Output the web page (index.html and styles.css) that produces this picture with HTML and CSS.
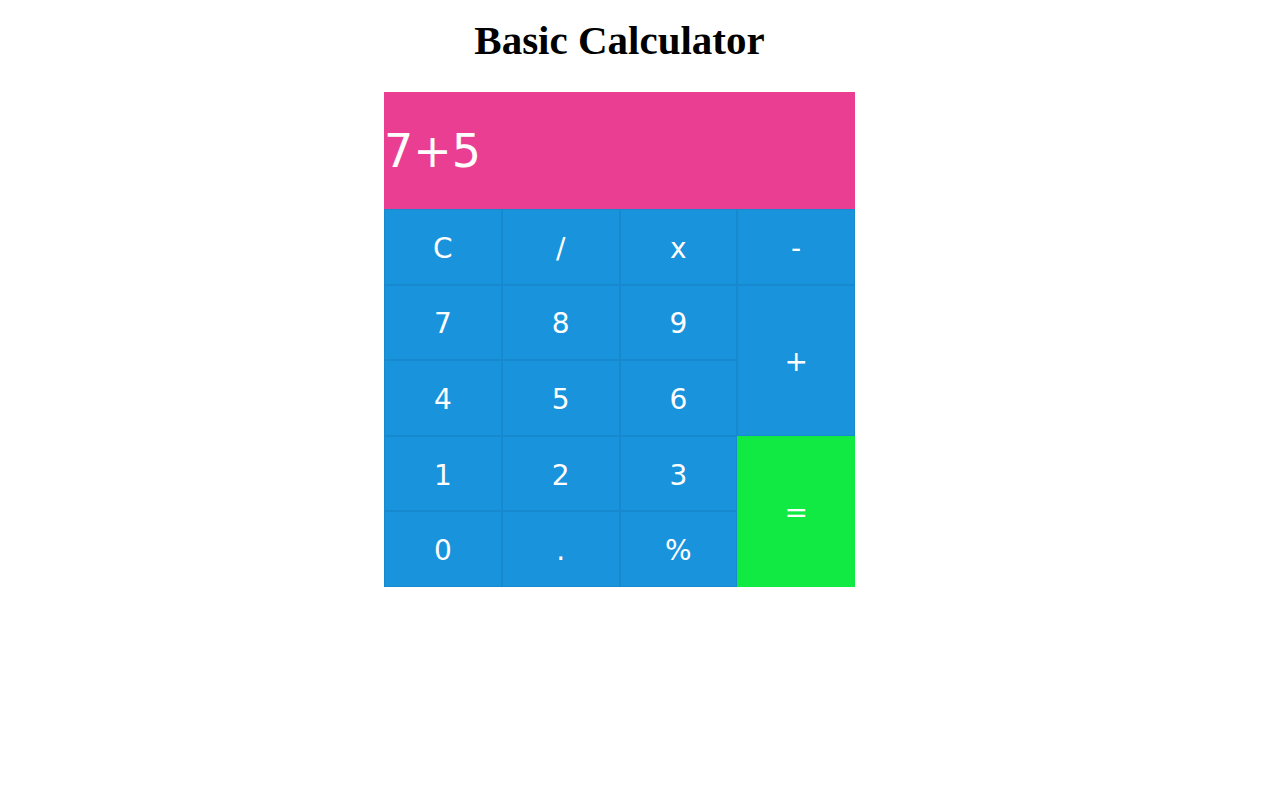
FILE: index.html
```html
<!DOCTYPE html>
<html lang="en">
<head>
<meta charset="utf-8">
<title>Basic Calculator</title>
<link rel="stylesheet" href="styles.css">
</head>
<body>
<div class="page">
  <h1 class="title">Basic Calculator</h1>
  <div class="calc">
    <div class="display">7+5</div>
    <div class="keys">
      <button class="key">C</button>
      <button class="key">/</button>
      <button class="key">x</button>
      <button class="key">-</button>
      <button class="key">7</button>
      <button class="key">8</button>
      <button class="key">9</button>
      <button class="key key-plus">+</button>
      <button class="key">4</button>
      <button class="key">5</button>
      <button class="key">6</button>
      <button class="key">1</button>
      <button class="key">2</button>
      <button class="key">3</button>
      <button class="key key-eq">=</button>
      <button class="key">0</button>
      <button class="key">.</button>
      <button class="key">%</button>
    </div>
  </div>
</div>
</body>
</html>
```

FILE: styles.css
```css
html, body {
  margin: 0;
  padding: 0;
  background: #ffffff;
}

.page {
  width: 1223px;
  margin-left: 8px;
  display: flex;
  flex-direction: column;
  align-items: center;
}

.title {
  margin: 17px 0 28px;
  font-family: "Liberation Serif", "Times New Roman", serif;
  font-weight: bold;
  font-size: 41px;
  line-height: 47px;
  color: #000;
}

.calc {
  width: 471px;
  display: flex;
  flex-direction: column;
}

.display {
  height: 117px;
  background: #e93e91;
  color: #ffffff;
  font-family: "DejaVu Sans", Verdana, sans-serif;
  font-size: 46px;
  display: flex;
  align-items: center;
  padding: 1px 0 0;
  box-sizing: border-box;
}

.keys {
  display: grid;
  grid-template-columns: repeat(4, 1fr);
  grid-template-rows: repeat(5, 75.6px);
}

.key {
  margin: 0;
  padding: 3px 0 0;
  border: 1px solid #1789cf;
  background: #1993dc;
  color: #ffffff;
  font-family: "DejaVu Sans", Verdana, sans-serif;
  font-size: 28px;
  cursor: pointer;
}

.key-plus {
  grid-column: 4;
  grid-row: 2 / span 2;
}

.key-eq {
  grid-column: 4;
  grid-row: 4 / span 2;
  background: #11ea43;
  border-color: #11ea43;
}
```
